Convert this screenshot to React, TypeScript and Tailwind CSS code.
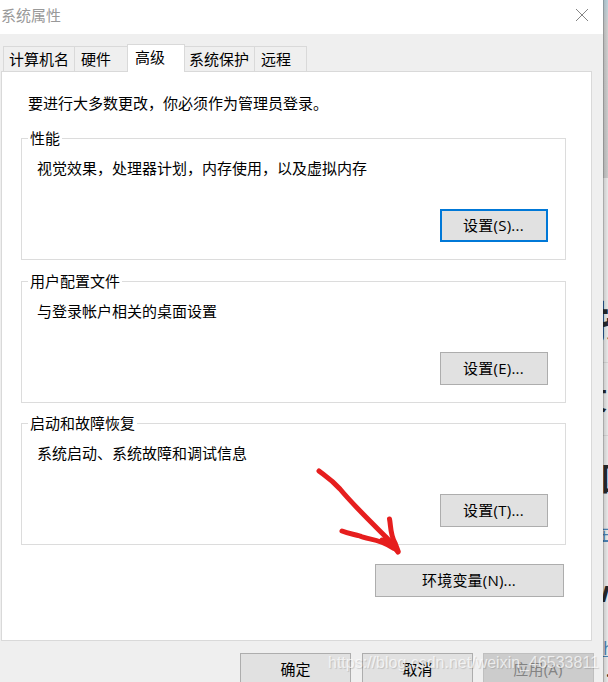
import type { ReactNode } from "react";

function Tab({ label, className, active }: { label: string; className: string; active?: boolean }) {
  return active ? (
    <div className={`relative h-[28px] border border-b-0 border-[#d9d9d9] bg-white pl-[7px] leading-[25px] ${className}`}>
      {label}
    </div>
  ) : (
    <div className={`h-[25px] border-t border-r border-[#d9d9d9] bg-[#efefef] leading-[25px] ${className}`}>
      {label}
    </div>
  );
}

function Button({ children, className }: { children: ReactNode; className: string }) {
  return (
    <button className={`flex shrink-0 justify-center bg-[#e1e1e1] ${className}`}>
      <span className="whitespace-nowrap leading-[31px]">{children}</span>
    </button>
  );
}

function Group({ title, text, button, focused, className }: { title: string; text: string; button: string; focused?: boolean; className: string }) {
  return (
    <section className={`flex h-[122px] w-[545px] flex-col border border-[#dcdcdc] ${className}`}>
      <h2 className="-mt-[12px] ml-[6px] h-[22px] self-start bg-white pr-[2px] pl-[2px] leading-[22px]">{title}</h2>
      <p className="mt-[8px] ml-[15px] h-[22px] leading-[22px]">{text}</p>
      <Button className={`mt-[30px] mr-[17px] h-[33px] w-[108px] self-end pr-px tracking-[0.25px] ${focused ? "border-2 border-[#0078d7] leading-[29px] [&>span]:leading-[29px]" : "border border-[#adadad]"}`}>
        {button}
      </Button>
    </section>
  );
}

function Backdrop() {
  return (
    <div className="relative h-[682px] w-[5px] shrink-0 overflow-hidden bg-[#e8e8e8] font-bold text-[#25282c]">
      <div className="h-[178px] bg-linear-to-b from-[#bdd3dd] via-[#d0d0d0] via-15% to-[#c9c9c9]" />
      <span className="absolute top-[296px] -left-[11px] text-[43px] leading-[52px]">按</span>
      <div className="absolute top-[362px] h-px w-full bg-[#d5d5d5]" />
      <span className="absolute top-[382px] -left-[24px] text-[28px] leading-[34px]">文</span>
      <div className="absolute top-[435px] h-px w-full bg-[#d5d5d5]" />
      <span className="absolute top-[460px] -left-[2px] text-[31px] leading-[36px]">国</span>
      <span className="absolute top-[524px] -left-[9px] text-[16px] leading-[20px] font-normal text-[#4a83b5]">在</span>
      <div className="absolute top-[541px] h-px w-full bg-[#4a83b5]" />
      <span className="absolute top-[576px] -left-[18px] text-[29px] leading-[30px]">w</span>
      <span className="absolute top-[638px] left-0 text-[18px] leading-[20px] font-normal text-[#4a83b5]">h</span>
      <div className="absolute top-[656px] h-px w-full bg-[#4a83b5]" />
      <span className="absolute top-[660px] left-[3px] text-[18px] leading-[20px]">.</span>
      <div className="absolute inset-0 bg-linear-to-r from-black/35 via-black/10 via-30% to-transparent" />
    </div>
  );
}

export default function App() {
  return (
    <main lang="zh-CN" className="relative flex h-[682px] w-[608px] overflow-hidden bg-[#efefef] font-['Open_Sans','Noto_Sans_CJK_SC',sans-serif] text-[15px] text-black">
      <div className="h-[682px] w-[603px] shrink-0 overflow-hidden">
        <header className="flex h-[34px] justify-between bg-white pr-[15px] pl-[1px] text-[#999]">
          <h1 className="leading-[31px]">系统属性</h1>
          <svg className="mt-[9px] size-[12px]" viewBox="0 0 12 12" fill="none" stroke="#858585" strokeWidth="1">
            <path d="M0 0L12 12M12 0L0 12" />
          </svg>
        </header>

        <nav className="ml-[3px] flex h-[37px] items-end">
          <Tab label="计算机名" className="w-[72px] border-l pl-[5px]" />
          <Tab label="硬件" className="w-[52px] border-r-0 pl-[6px]" />
          <Tab label="高级" active className="-mb-px w-[58px]" />
          <Tab label="系统保护" className="w-[70px] pl-[4px]" />
          <Tab label="远程" className="w-[52px] pl-[6px]" />
        </nav>

        <div className="ml-px flex h-[570px] w-[591px] flex-col border border-[#d9d9d9] bg-white">
          <p className="mt-[20px] ml-[26px] h-[22px] leading-[22px]">要进行大多数更改，你必须作为管理员登录。</p>
          <Group title="性能" text="视觉效果，处理器计划，内存使用，以及虚拟内存" button="设置(S)..." focused className="mt-[24px] ml-[19px]" />
          <Group title="用户配置文件" text="与登录帐户相关的桌面设置" button="设置(E)..." className="mt-[21px] ml-[19px]" />
          <Group title="启动和故障恢复" text="系统启动、系统故障和调试信息" button="设置(T)..." className="mt-[20px] ml-[19px]" />
          <Button className="mt-[19px] mr-[27px] h-[33px] w-[189px] self-end border border-[#adadad] pr-px tracking-[0.2px]">环境变量(N)...</Button>
        </div>

        <footer className="mt-[12px] ml-[240px] flex">
          <Button className="h-[33px] w-[111px] border border-[#adadad]">确定</Button>
          <Button className="ml-[11px] h-[33px] w-[111px] border border-[#adadad]">取消</Button>
          <Button className="ml-[10px] h-[33px] w-[111px] border border-[#bfbfbf] bg-[#cccccc]! pr-px tracking-[0.2px] text-[#838383]">应用(A)</Button>
        </footer>
      </div>

      <Backdrop />

      <svg className="absolute top-[450px] left-[300px] h-[120px] w-[130px]" viewBox="0 0 130 120" fill="none" stroke="#e61e1e" strokeWidth="5" strokeLinecap="round" strokeLinejoin="round">
        <path d="M19 21C24 25 31 29 40 39C55 57 75 76 90 91L98 102" />
        <path d="M42 81C49 84 54 84 60 86C68 90 78 88 93 98L82 90L90 92" />
        <path d="M89.500 69C91 76 90 84 95 93L98 101L92 96L86 88" />
      </svg>

      <div className="absolute top-[653px] left-[328px] font-['Liberation_Sans',sans-serif] text-[16px] leading-[20px] whitespace-nowrap text-white/70 [text-shadow:1px_1px_1px_rgb(0_0_0/0.15)]">
        https://blog.csdn.net/weixin_46533811
      </div>
    </main>
  );
}
